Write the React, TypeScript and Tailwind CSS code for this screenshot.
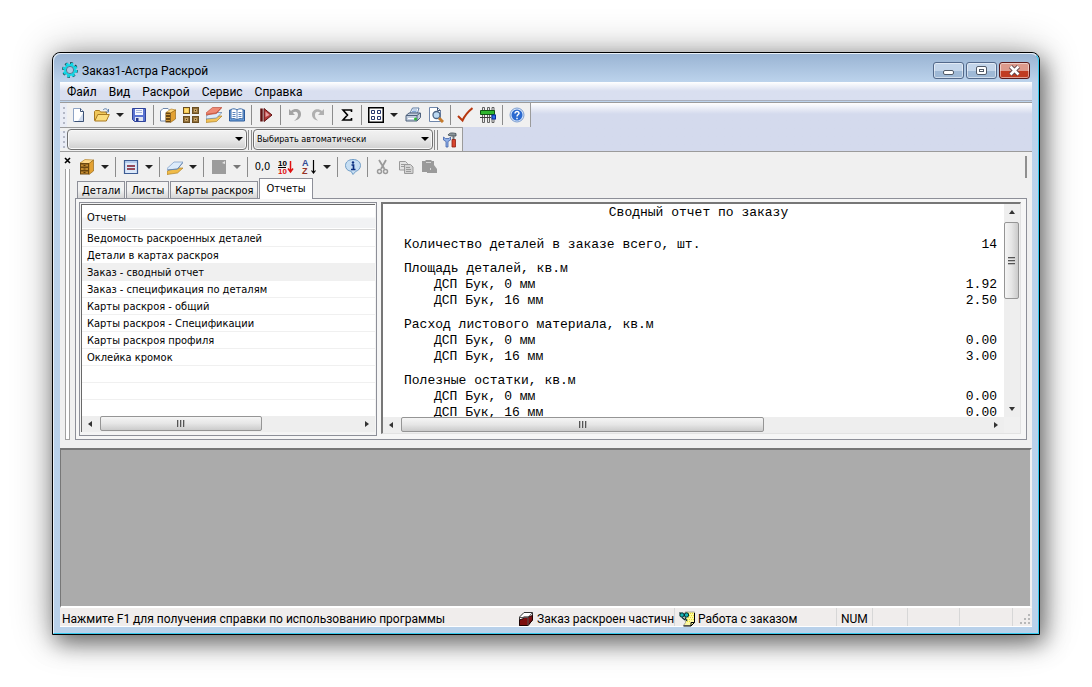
import type { ReactNode } from "react";
import clsx from "clsx";

type IconProps = { children: ReactNode; size?: number };

function Svg({ children, size = 16 }: IconProps) {
  return (
    <svg width={size} height={size} viewBox="0 0 16 16" fill="none" className="shrink-0">
      {children}
    </svg>
  );
}

const icons = {
  gear: (
    <Svg>
      <circle cx="8" cy="8" r="6.6" stroke="#17383f" strokeWidth="2.6" strokeDasharray="2.6 2.58" />
      <circle cx="8" cy="8" r="6.4" stroke="#12d8e6" strokeWidth="2" strokeDasharray="2.6 2.43" />
      <circle cx="8" cy="8" r="4.8" stroke="#12d8e6" strokeWidth="2.200" />
      <circle cx="8" cy="8" r="3.6" stroke="#3b6a80" strokeWidth="0.8" />
    </Svg>
  ),
  file: (
    <Svg>
      <path d="M2.500 1.500h7l3 3v10h-10z" fill="#fff" stroke="#8ea3c4" />
      <path d="M12 6v8H7z" fill="#cfdbee" />
      <path d="M9.500 1.500v3h3v10h-9" stroke="#3d5275" />
    </Svg>
  ),
  open: (
    <Svg>
      <path d="M.5 13.500V4.500l1-1h4l1 1.500h6v3" fill="#f0c75a" stroke="#a87920" />
      <path d="M.8 14l3-6.500h11.500l-3 6.500z" fill="#fbdc7c" stroke="#a87920" />
      <path d="M9 3c2-2 4-1.500 5 1M14.500 2v3h-3" stroke="#5c7fae" />
    </Svg>
  ),
  save: (
    <Svg>
      <path d="M1.500 1.500h13v13h-11l-2-2z" fill="#5a73d2" stroke="#2f4399" />
      <path d="M4 2h8v6H4z" fill="#f4f7ff" />
      <path d="M5 3.500h6M5 5.500h6" stroke="#a8b6dc" />
      <path d="M4 10h8v4H4z" fill="#dfe4f2" />
      <path d="M5 11h2.500v3H5z" fill="#25378c" />
    </Svg>
  ),
  cabinetDoc: (
    <Svg>
      <path d="M3 1.500h5l2 2V14H.5V4z" fill="#fff" stroke="#6f86aa" />
      <path d="M6 5.500L11 2l5 1-5.500 3.500z" fill="#ffd67a" stroke="#a87315" strokeWidth="0.6" />
      <path d="M10.500 6L15.500 3v9l-5 3.500z" fill="#e3a132" stroke="#8a5c0c" strokeWidth="0.6" />
      <path d="M5.500 5.500h5v10h-5z" fill="#6b4710" />
      <path d="M6 7.500h4M6 10.500h4M6 13.500h4" stroke="#d29a3a" />
    </Svg>
  ),
  crates: (
    <Svg>
      {[0, 9].map((x) =>
        [0, 9].map((y) => (
          <g key={`${x}-${y}`}>
            <rect x={x + 0.5} y={y + 0.5} width="6" height="6" fill={x + y === 0 ? "#f5c94f" : "#8f6f3c"} stroke="#6a4d20" />
            <rect x={x + 2} y={y + 2} width="3" height="3" fill={x + y === 0 ? "#ffdc78" : "#c7a365"} />
            {x + y > 0 && <rect x={x + 3} y={y + 3} width="1" height="1" fill="#4a3413" />}
          </g>
        )),
      )}
    </Svg>
  ),
  layers: (
    <Svg>
      <path d="M0 12.500L5 9h11l-5.500 5.500L0 15.500z" fill="#f3c45a" stroke="#a3741a" strokeWidth="0.6" />
      <path d="M0 9L6 5.500h10L10.500 11 0 12z" fill="#dcebfa" stroke="#4a6b95" strokeWidth="0.6" />
      <path d="M0 6L6.500.500H16L10.500 6.500 0 8z" fill="#ee8a74" stroke="#b5422e" strokeWidth="0.6" />
      <path d="M1 7.200l9-1.200 5-5" stroke="#c4553e" strokeWidth="0.8" />
    </Svg>
  ),
  book: (
    <Svg>
      <path d="M.5 3h15v11H.5z" fill="#6fa1db" stroke="#2d5c9c" />
      <path d="M2 2.500c2-1 4-1 6 .5 2-1.500 4-1.500 6-.5V12c-2-.8-4-.6-6 .8-2-1.400-4-1.600-6-.8z" fill="#fff" stroke="#3f6da8" />
      <path d="M8 3v10M3.500 5.500h3M3.500 7.500h3M3.500 9.500h3M9.500 5.500h3M9.500 7.500h3M9.500 9.500h3" stroke="#5e86bd" />
    </Svg>
  ),
  run: (
    <Svg>
      <path d="M3.500 1.500v13" stroke="#5f1010" strokeWidth="2.500" />
      <path d="M6 1.500L14 8l-8 6.500z" fill="#b33a3a" stroke="#5f1010" />
      <path d="M7.500 4.500L11.500 8 7.500 10z" fill="#e7a1a1" />
    </Svg>
  ),
  undo: (
    <Svg>
      <path d="M2 2v6h6L5.800 5.800C8 4 11 4.500 11 8c0 2-1.500 4-4 6 4-1 7-3 7-7 0-5-6-6.500-10-3z" fill="#a3a3a3" />
    </Svg>
  ),
  redo: (
    <Svg>
      <path d="M14 2v6H8l2.200-2.200C8 4 5 4.500 5 8c0 2 .5 3.500 3 5.500C4 13 2 10.500 2 7.500c0-5 6-7 10-3.500z" fill="#b0b0b0" />
    </Svg>
  ),
  sigma: (
    <Svg>
      <path d="M12.500 5V3H4l4.500 5L4 13h8.500v-2" stroke="#000" strokeWidth="1.600" />
    </Svg>
  ),
  grid: (
    <Svg>
      <rect x=".75" y=".75" width="14.500" height="14.500" fill="#fff" stroke="#000" strokeWidth="1.500" />
      <path d="M3.500 3.500h3v3h-3zM9.500 3.500h3v3h-3zM3.500 9.500h3v3h-3zM9.500 9.500h3v3h-3z" stroke="#25366f" />
    </Svg>
  ),
  printer: (
    <Svg>
      <path d="M5 6l2.500-5H14l-1.500 5z" fill="#fff" stroke="#5d7ba3" />
      <path d="M7.500 3h4.500M7 4.500h4.500" stroke="#7fa3d4" />
      <path d="M1 8.500L4 6h11.500v4.500L12 14H1z" fill="#c2cddd" stroke="#4f627d" />
      <path d="M1 8.500h11V14M12 8.500L15 6" stroke="#4f627d" />
      <path d="M3 11.500h8" stroke="#fff" />
      <circle cx="10.500" cy="12" r="1.500" fill="#29b735" />
    </Svg>
  ),
  preview: (
    <Svg>
      <path d="M1.500.500h8l3 3v11h-11z" fill="#fff" stroke="#6f86aa" />
      <path d="M9.500.500v3h3" stroke="#3d5275" />
      <circle cx="8.500" cy="8" r="3.500" fill="#bcd9f2" stroke="#4d6484" strokeWidth="1.300" />
      <path d="M11 11l4 4" stroke="#c57b2c" strokeWidth="3" />
    </Svg>
  ),
  check: (
    <Svg>
      <path d="M1 9l4.500 4.500C7.500 9 10.500 5 15.500 1" stroke="#b7370f" strokeWidth="2" />
    </Svg>
  ),
  posts: (
    <Svg>
      <path d="M2.500.500h2v15h-2zM7.500.500h2v15h-2zM12 .500h2v15h-2z" fill="#e9e9e9" stroke="#555" strokeWidth="0.900" />
      <path d="M.5 3.500h14v4H.5z" fill="#2eb52e" stroke="#0e5312" />
      <path d="M0 10.500h11" stroke="#3c3c3c" />
      <rect x="12" y="8" width="3.500" height="4" fill="#2d6fe8" stroke="#08299b" />
    </Svg>
  ),
  help: (
    <Svg>
      <circle cx="8" cy="8" r="7" fill="#d5e4f8" stroke="#7f9fd0" />
      <circle cx="8" cy="8" r="5.500" fill="#2b6ad0" />
      <path d="M6 6.500C6 3.700 10.200 4 10 6.300 9.900 7.600 8 7.500 8 9.500M8 10.700v1.500" stroke="#fff" strokeWidth="1.500" />
    </Svg>
  ),
  tools: (
    <Svg>
      <path d="M.5 5v3l2.500 1.500V15h2V9.500L7.500 8V5L6 6.500H2.500z" fill="#8fb0e8" stroke="#4262a8" strokeWidth="0.800" />
      <path d="M5 3c2-3 5-2 8-1.500V4H8z" fill="#8a9499" stroke="#3e4a50" strokeWidth="0.800" />
      <path d="M9.500 4h2v4h-2z" fill="#70777b" />
      <path d="M9 7.500h3.500V15H9z" fill="#d8452e" stroke="#8e1f12" strokeWidth="0.800" />
    </Svg>
  ),
  cabinet: (
    <Svg>
      <path d="M1 4L6 .5l8.500.5L10 5z" fill="#ffd98a" stroke="#a87315" strokeWidth="0.6" />
      <path d="M10 4.500L14.500 1v11L10 15.500z" fill="#e3a132" stroke="#8a5c0c" strokeWidth="0.6" />
      <path d="M1 4h9v11.500H1z" fill="#6b4710" />
      <path d="M2 5.500h7v2H2zM2 9h7v2H2zM2 12.500h7v2H2z" fill="#c58c30" />
      <path d="M4.500 6.500h2M4.500 10h2M4.500 13.500h2" stroke="#5a3a08" />
    </Svg>
  ),
  form: (
    <Svg>
      <path d="M1.500 1.500h13v13h-13z" fill="#dce9fa" stroke="#3d5c94" strokeWidth="1.200" />
      <path d="M2 3h12" stroke="#8cadde" />
      <path d="M4 7h8M4 10h8" stroke="#7c1526" strokeWidth="1.400" />
    </Svg>
  ),
  sheets: (
    <Svg>
      <path d="M0 12.500L5 9h11l-5.500 5L0 15.500z" fill="#f0bb48" stroke="#a3741a" strokeWidth="0.6" />
      <path d="M0 9.500L7 3h9l-5.500 7L0 11z" fill="#dcebfb" stroke="#6388b8" strokeWidth="0.6" />
      <path d="M.5 11l10-1L16 3.500" stroke="#5b7ca8" strokeWidth="0.800" />
    </Svg>
  ),
  note: (
    <Svg>
      <path d="M1 1h14v14H1z" fill="#9c9c9c" />
      <path d="M11 4l3-2v3z" fill="#e5e5e5" />
    </Svg>
  ),
  sortNumbers: (
    <Svg>
      <text x="0" y="7" fontSize="8" fontWeight="bold" fontFamily="Liberation Sans, sans-serif" fill="#000">10</text>
      <text x="0" y="15" fontSize="8" fontWeight="bold" fontFamily="Liberation Sans, sans-serif" fill="#e01010">10</text>
      <path d="M0 8.500h8" stroke="#000" />
      <path d="M12.500 2v11M10 9.500l2.500 3.500L15 9.500" stroke="#e01010" strokeWidth="1.500" />
    </Svg>
  ),
  sortLetters: (
    <Svg>
      <text x="1" y="7" fontSize="9" fontWeight="bold" fontFamily="Liberation Sans, sans-serif" fill="#314a93">A</text>
      <text x="1" y="15" fontSize="9" fontWeight="bold" fontFamily="Liberation Sans, sans-serif" fill="#963227">Z</text>
      <path d="M12.500 1v13M10.500 11.500l2 2.500 2-2.500" stroke="#000" strokeWidth="1.200" />
    </Svg>
  ),
  info: (
    <Svg>
      <path d="M8 .5c4.500 0 7.500 2.500 7.500 6S12.500 12 11 12.200L8 15.500 6 12.200C3 12 .5 10 .5 6.500s3-6 7.500-6z" fill="#c6def3" stroke="#6f9cc6" />
      <path d="M6.500 6h2v4.500M6 10.500h4.500" stroke="#0a2f80" strokeWidth="1.700" />
      <circle cx="8" cy="3.500" r="1.200" fill="#0a2f80" />
    </Svg>
  ),
  cut: (
    <Svg>
      <path d="M4 1l5.500 9M11 1L6 10" stroke="#9a9a9a" strokeWidth="1.800" />
      <circle cx="4.500" cy="12.500" r="2" stroke="#9a9a9a" strokeWidth="1.500" />
      <circle cx="10.500" cy="12.500" r="2" stroke="#9a9a9a" strokeWidth="1.500" />
    </Svg>
  ),
  copy: (
    <Svg>
      <path d="M1.500 2.500h6l2 2V11h-8z" fill="#e3e3e3" stroke="#9a9a9a" />
      <path d="M3 5.500h4M3 7.500h4" stroke="#9a9a9a" />
      <path d="M6.500 5.500h6l2.500 2.500v6.500H6.500z" fill="#d3d3d3" stroke="#9a9a9a" />
      <path d="M8 8.500h4M8 10.500h5M8 12.500h5" stroke="#9a9a9a" />
    </Svg>
  ),
  paste: (
    <Svg>
      <path d="M1 2h3l1-1h5l1 1h2v4l3 4v4H6v-1H1z" fill="#9a9a9a" />
      <path d="M5 3.500h5M9.500 9v2" stroke="#d5d5d5" />
    </Svg>
  ),
  order: (
    <Svg>
      <path d="M1.500 6L6 1.500h8.500V9L10 14.500H1.500z" fill="#fff" stroke="#333" />
      <path d="M1.500 9l4-1.500V6h4.500l4.500-1.500V9L10 14.500H1.500z" fill="#7c0f0f" stroke="#1c0202" />
      <path d="M10 6.500v8M1.500 6.500H10l4.500-5" stroke="#555" />
    </Svg>
  ),
  job: (
    <Svg>
      <path d="M6 1h9.500v10.500l-3 3H4.500l2-3z" fill="#fdf8a0" stroke="#777" strokeWidth="0.600" />
      <path d="M9 2.500h6M8 4.500h7M9 6.500h6M8 8.500h7M8 10.500h4" stroke="#e8df2a" strokeDasharray="1 1" />
      <path d="M15.500 2v9.500l-3.500 3.500H4.500M12 15v-3.500h3.500" stroke="#000" />
      <circle cx="3" cy="4" r="2.200" fill="#16b5b5" stroke="#04282b" />
      <circle cx="7.500" cy="4" r="2.200" fill="#16b5b5" stroke="#04282b" />
      <path d="M0 2h2M6 6.500L8 10M3 6.500L6 9" stroke="#04282b" strokeWidth="1.200" />
    </Svg>
  ),
};

type IconName = keyof typeof icons;

const MENU = ["Файл", "Вид", "Раскрой", "Сервис", "Справка"];

const MAIN_TOOLS = "file open v save | cabinetDoc crates layers book | run | undo redo | sigma | grid v printer preview | check posts | help".split(" ");

const PANEL_TOOLS = "cabinet v | form v | sheets v | note x | zero sortNumbers sortLetters v | info | cut copy paste".split(" ");

const TABS = ["Детали", "Листы", "Карты раскроя", "Отчеты"];

const REPORTS = [
  "Ведомость раскроенных деталей",
  "Детали в картах раскроя",
  "Заказ - сводный отчет",
  "Заказ - спецификация по деталям",
  "Карты раскроя - общий",
  "Карты раскроя - Спецификации",
  "Карты раскроя профиля",
  "Оклейка кромок",
  "",
  "",
];

const SECTIONS = [
  { title: "Площадь деталей, кв.м", values: ["1.92", "2.50"] },
  { title: "Расход листового материала, кв.м", values: ["0.00", "3.00"] },
  { title: "Полезные остатки, кв.м", values: ["0.00", "0.00"] },
];

const MATERIALS = ["ДСП Бук, 0 мм", "ДСП Бук, 16 мм"];

function Caret({ className = "border-t-black" }: { className?: string }) {
  return <span className={clsx("block h-0 w-0 border-x-4 border-t-4 border-x-transparent", className)} />;
}

function Tool({ name, wide }: { name: string; wide?: boolean }) {
  if (name === "|") {
    return (
      <span className={clsx("flex h-5 shrink-0 justify-center", wide ? "w-[7px]" : "w-[6px]")}>
        <span className="w-px bg-[#8c8c8c]" />
      </span>
    );
  }
  if (name === "v" || name === "x") {
    return (
      <button aria-label="Меню" className="flex h-5 w-[14px] shrink-0 items-center justify-center">
        <Caret className={name === "x" ? "border-t-[#777]" : "border-t-[#222]"} />
      </button>
    );
  }
  return (
    <button aria-label={name} className="flex h-5 w-[23px] shrink-0 items-center justify-center">
      {name === "zero" ? <span className="text-[11px]">0,0</span> : icons[name as IconName]}
    </button>
  );
}

function Grip() {
  return (
    <span className="flex w-[7px] shrink-0 flex-col items-center justify-center gap-[3px] bg-[#e9ecf5]">
      {[0, 1, 2, 3].map((i) => (
        <span key={i} className="h-[2px] w-[2px] bg-[#b4b8c6]" />
      ))}
    </span>
  );
}

function Combo({ label, value }: { label: string; value: string }) {
  return (
    <div className="relative w-[180px]">
      <select
        aria-label={label}
        className="block h-[21px] w-full appearance-none rounded-sm border border-[#707070] bg-linear-to-b from-[#f2f2f2] via-[#e8e8e8] to-[#cfcfcf] px-[3px] font-['Tahoma','DejaVu_Sans_Condensed',sans-serif] text-[9px] text-black shadow-[inset_0_0_0_1px_#f8f8f8]"
      >
        <option>{value}</option>
      </select>
      <span className="pointer-events-none absolute top-2 right-1">
        <Caret />
      </span>
    </div>
  );
}

function ScrollArrow({ dir }: { dir: "left" | "right" | "up" | "down" }) {
  return (
    <button aria-label={dir} className="flex h-4 w-4 shrink-0 items-center justify-center">
      <span
        className={clsx(
          "h-0 w-0 border-transparent",
          dir === "left" && "border-y-[3px] border-r-4 border-r-[#333]",
          dir === "right" && "border-y-[3px] border-l-4 border-l-[#333]",
          dir === "up" && "border-x-[3px] border-b-4 border-b-[#333]",
          dir === "down" && "border-x-[3px] border-t-4 border-t-[#333]",
        )}
      />
    </button>
  );
}

function HScroll({ thumb }: { thumb: string }) {
  return (
    <div className="flex h-4 shrink-0 bg-[#eeeeee]">
      <ScrollArrow dir="left" />
      <div className="min-w-0 flex-1 px-[2px]">
        <div
          className={clsx(
            "flex h-[15px] items-center justify-center gap-px rounded-xs border border-[#959595] bg-linear-to-b from-[#f5f5f5] via-[#e6e6e6] to-[#cbcbcb]",
            thumb,
          )}
        >
          {[0, 1, 2].map((i) => (
            <span key={i} className="h-[7px] w-[2px] border-l border-[#555] bg-[#bbb]" />
          ))}
        </div>
      </div>
      <ScrollArrow dir="right" />
    </div>
  );
}

function TitleBar() {
  const button =
    "flex h-[17px] w-[31px] items-center justify-center rounded-[3px] border shadow-[inset_0_0_0_1px_rgba(255,255,255,0.5)]";
  const plain = "border-[#53698a] bg-linear-to-b from-[#c3d5ea] from-50% to-[#9fb9d6] to-50%";
  return (
    <header className="flex h-7 items-center gap-1 pt-1 pl-[2px] text-xs">
      {icons.gear}
      <h1 className="flex-1 pt-px">Заказ1-Астра Раскрой</h1>
      <div className="flex gap-[2px] pr-[2px]">
        <button aria-label="Свернуть" className={clsx(button, plain)}>
          <span className="mt-1 h-[5px] w-[11px] rounded-xs border border-[#505a68] bg-white" />
        </button>
        <button aria-label="Развернуть" className={clsx(button, plain)}>
          <span className="flex h-[9px] w-[11px] items-center justify-center rounded-xs border border-[#505a68] bg-white">
            <span className="h-[3px] w-[5px] border border-[#505a68]" />
          </span>
        </button>
        <button aria-label="Закрыть" className={clsx(button, "border-[#5a1a1a] bg-linear-to-b from-[#dd9a8c] from-50% to-[#c03c22] to-50%")}>
          <svg width="13" height="11" viewBox="0 0 13 11">
            <path d="M2.500 1.500l8 8M10.500 1.500l-8 8" stroke="#5a4148" strokeWidth="4.400" />
            <path d="M2.500 1.500l8 8M10.500 1.500l-8 8" stroke="#fff" strokeWidth="2.600" />
          </svg>
        </button>
      </div>
    </header>
  );
}

function Toolbars() {
  return (
    <div className="border-t border-b border-[#9b9b9b] bg-linear-to-b from-white to-[#d4daed] to-[11px]">
      <div className="flex h-6 w-fit border-r border-[#9b9b9b] bg-[#f0f0f0]">
        <Grip />
        <div className="flex items-center pr-[2px]">
          {MAIN_TOOLS.map((name, i) => (
            <Tool key={i} name={name} />
          ))}
        </div>
      </div>
      <div className="flex h-6 w-fit items-center border-t border-r border-[#9b9b9b] bg-[#f0f0f0]">
        <Grip />
        <Combo label="Материал" value="" />
        <span className="mx-px h-5 w-1 border-x border-[#8c8c8c]" />
        <Combo label="Режим" value="Выбирать автоматически" />
        <span className="mx-px h-5 w-1 border-x border-[#8c8c8c]" />
        <Tool name="tools" />
      </div>
    </div>
  );
}

function ReportList() {
  return (
    <div className="flex w-[298px] shrink-0 flex-col border border-[#8d8f98] bg-[#f4f4f4] p-px pb-[3px]">
      <div className="flex min-h-0 flex-1 flex-col border-t border-l border-[#696969] bg-white">
        <table className="w-full border-collapse text-left">
          <thead>
            <tr className="h-6 border-b border-[#d8d8d8] bg-linear-to-b from-white from-50% to-[#f1f2f4] to-60%">
              <th className="px-[5px] pt-[2px] font-normal">Отчеты</th>
            </tr>
          </thead>
          <tbody>
            {REPORTS.map((name, i) => (
              <tr key={i} className={clsx("h-[17px] border-b border-[#f0f0f0]", i === 2 && "bg-[#f0f0f0]")}>
                <td className="px-[5px] pt-px leading-[15px]">{name}</td>
              </tr>
            ))}
          </tbody>
        </table>
        <div className="mt-auto">
          <HScroll thumb="w-[162px]" />
        </div>
      </div>
    </div>
  );
}

function Report() {
  return (
    <div className="min-w-0 flex-1 overflow-hidden bg-white pt-px pr-[7px] pl-[21px] font-['Courier_New','Liberation_Mono',monospace] text-[13px] leading-4">
      <h2 className="mb-4 pr-1 text-center">Сводный отчет по заказу</h2>
      <p className="mb-2 flex justify-between">
        <span>Количество деталей в заказе всего, шт.</span>
        <span>14</span>
      </p>
      {SECTIONS.map(({ title, values }) => (
        <section key={title} className="mb-2">
          <h3>{title}</h3>
          {values.map((value, i) => (
            <p key={i} className="flex justify-between pl-[30px]">
              <span>{MATERIALS[i]}</span>
              <span>{value}</span>
            </p>
          ))}
        </section>
      ))}
    </div>
  );
}

function ReportView() {
  return (
    <div className="mb-[2px] flex min-w-0 flex-1 flex-col border-t-2 border-r border-b border-l-2 border-t-[#777] border-r-[#e3e3e3] border-b-[#e3e3e3] border-l-[#777] bg-[#f0f0f0]">
      <div className="flex min-h-0 flex-1">
        <Report />
        <div className="flex w-4 shrink-0 flex-col bg-[#eeeeee]">
          <ScrollArrow dir="up" />
          <div className="flex-1 pt-[2px]">
            <div className="flex h-[77px] w-[15px] flex-col items-center justify-center gap-px rounded-xs border border-[#959595] bg-linear-to-r from-[#f5f5f5] via-[#e6e6e6] to-[#cbcbcb]">
              {[0, 1, 2].map((i) => (
                <span key={i} className="h-[2px] w-[7px] border-t border-[#555] bg-[#bbb]" />
              ))}
            </div>
          </div>
          <ScrollArrow dir="down" />
        </div>
      </div>
      <div className="pr-4">
        <HScroll thumb="w-[363px]" />
      </div>
    </div>
  );
}

function DockPanel() {
  return (
    <div className="flex bg-[#f0f0f0] pb-2">
      <div className="flex w-[15px] shrink-0 flex-col items-center pt-1">
        <button aria-label="Закрыть панель" className="h-[9px] pr-px">
          <svg width="7" height="7" viewBox="0 0 7 7">
            <path d="M1 1l5 5M6 1L1 6" stroke="#000" strokeWidth="1.600" />
          </svg>
        </button>
        <span className="mt-1 w-[5px] flex-1 border-x border-b border-[#a0a0a0] bg-white" />
      </div>
      <div className="min-w-0 flex-1 pr-[5px]">
        <div className="flex h-[26px] items-center justify-between pt-1">
          <div className="flex">
            {PANEL_TOOLS.map((name, i) => (
              <Tool key={i} name={name} wide />
            ))}
          </div>
          <span className="h-[22px] w-[2px] bg-[#8f8f8f]" />
        </div>
        <div role="tablist" className="flex h-5 items-end pl-[2px]">
          {TABS.map((tab) => (
            <button
              key={tab}
              role="tab"
              aria-selected={tab === "Отчеты"}
              className={clsx(
                "border border-b-0 border-[#8d8f98] whitespace-nowrap",
                tab === "Отчеты"
                  ? "z-10 -mb-px h-[21px] bg-white px-[6px]"
                  : "mr-px h-[17px] bg-linear-to-b from-[#f2f2f2] from-50% to-[#d5d5d5] px-[4px] pt-px",
              )}
            >
              {tab}
            </button>
          ))}
        </div>
        <div className="flex h-[242px] gap-1 border border-[#8d8f98] bg-[#f6f6f6] p-[3px] pr-[5px]">
          <ReportList />
          <ReportView />
        </div>
      </div>
    </div>
  );
}

function StatusBar() {
  const cell = "flex shrink-0 items-center border-l border-[#d7d7d7]";
  return (
    <footer className="flex h-[19px] shrink-0 border-b border-white bg-[#f0edec] text-xs whitespace-nowrap">
      <p className="flex min-w-0 flex-1 items-center overflow-hidden pt-[3px] pl-[2px]">
        Нажмите F1 для получения справки по использованию программы
      </p>
      <p className="flex w-[156px] shrink-0 items-center gap-[3px] overflow-hidden pt-[3px]">
        {icons.order} Заказ раскроен частично
      </p>
      <p className={clsx(cell, "w-[162px] gap-[3px] pt-[3px] pl-1")}>
        {icons.job} Работа с заказом
      </p>
      <p className={clsx(cell, "w-[36px] pt-[3px] pl-1")}>NUM</p>
      <span className={clsx(cell, "w-[35px]")} />
      <span className={clsx(cell, "w-[52px]")} />
      <span className={clsx(cell, "w-[53px]")} />
      <span className="flex w-[20px] items-end justify-end border-l border-[#d7d7d7] p-[2px]">
        <svg width="10" height="10" viewBox="0 0 10 10" fill="#b8b8b8">
          <path d="M8 0h2v2H8zM4 4h2v2H4zM8 4h2v2H8zM0 8h2v2H0zM4 8h2v2H4zM8 8h2v2H8z" />
        </svg>
      </span>
    </footer>
  );
}

export default function App() {
  return (
    <div className="flex min-h-screen flex-col overflow-hidden bg-white p-[52px] font-['Segoe_UI','Roboto','Open_Sans',sans-serif] text-black">
      <main className="flex flex-1 flex-col rounded-t-lg border border-black bg-[#b9d1ea] shadow-[4px_8px_22px_rgba(0,0,0,0.5),0_0_40px_rgba(0,0,0,0.3)]">
        <div className="flex flex-1 flex-col rounded-t-lg border border-t-white/70 border-r-[#35c9ee] border-b-[#35c9ee] border-l-white/70 bg-linear-to-b from-[#9ab4d3] via-[#bcd3ec] via-[28px] to-[#b9d1ea] px-[6px] pb-[6px]">
          <TitleBar />
          <nav className="mb-px flex h-[19px] items-center gap-3 border-b border-[#a9aebb] bg-linear-to-b from-white to-[#d9dff0] to-50% px-[7px] pt-px text-xs">
            {MENU.map((item) => (
              <button key={item}>{item}</button>
            ))}
          </nav>
          <Toolbars />
          <div className="flex flex-1 flex-col font-['Tahoma','DejaVu_Sans_Condensed','Open_Sans',sans-serif] text-[11px]">
            <DockPanel />
            <div className="flex-1 border-t-2 border-r-2 border-b-2 border-l border-t-[#777] border-r-[#f0f0f0] border-b-white border-l-[#777] bg-[#ababab]" />
          </div>
          <StatusBar />
        </div>
      </main>
    </div>
  );
}
